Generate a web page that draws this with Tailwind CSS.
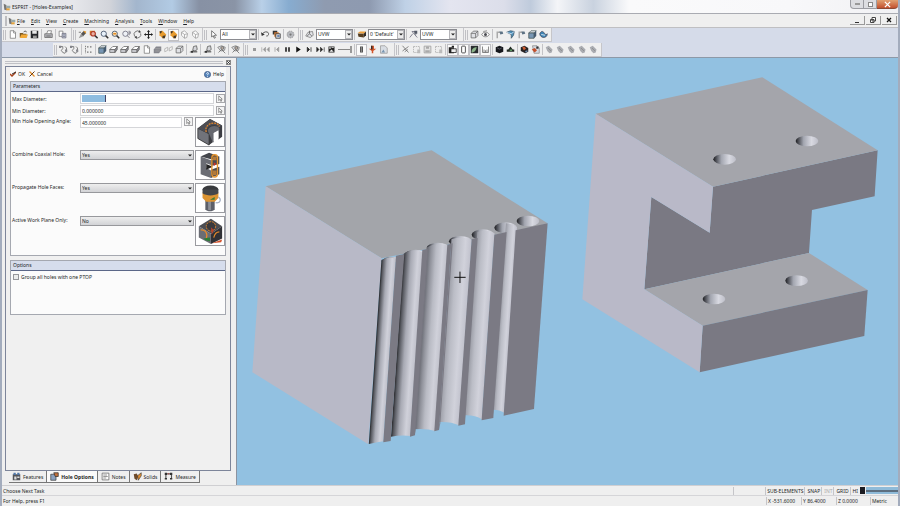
<!DOCTYPE html>
<html lang="en">
  <head>
    <meta charset="UTF-8" />
    <meta name="viewport" content="width=device-width, initial-scale=1.0" />
    <title>ESPRIT - [Holes-Examples]</title>
    <script src="https://cdn.jsdelivr.net/npm/@tailwindcss/browser@4"></script>
  </head>
  <body
    class="flex h-screen flex-col overflow-hidden border-x-2 border-[#a3acbd] bg-[#efefef] font-['Noto_Sans',sans-serif] text-[5px] leading-[8px] whitespace-nowrap text-[#1c1f26]"
  >
    <!-- icon set -->
    <svg class="hidden">
      <symbol id="new" viewBox="0 0 12 12"><path d="M3 1h5l2 2v8H3z" fill="#fff" stroke="#777" /><path d="M7.500 1v3H10" fill="none" stroke="#777" /></symbol>
      <symbol id="open" viewBox="0 0 12 12"><path d="M1 4h4l1 1h4v5H1z" fill="#7c5a24" /><path d="M3 6h9l-2 4.500H1z" fill="#f0a836" /><path d="M6 3c1-2 4-2 4 0" stroke="#333" fill="none" /></symbol>
      <symbol id="save" viewBox="0 0 12 12"><path d="M1 1h10v10H1z" fill="#26272b" /><path d="M3 1h6v4H3z" fill="#e8e8e8" /><path d="M4 7.500h5V11H4z" fill="#999" /></symbol>
      <symbol id="print" viewBox="0 0 12 12"><path d="M3.500 5L5 1h5L9 5" fill="#fff" stroke="#777" /><path d="M1 5h10v5H1z" fill="#b5b6bb" stroke="#666" /><path d="M3 8h6" stroke="#555" /></symbol>
      <symbol id="copy" viewBox="0 0 12 12"><path d="M1.500 1.500h5v7h-5z" fill="#fff" stroke="#777" /><path d="M5.500 4.500h5v6h-5z" fill="#cfd6e4" stroke="#667" /><path d="M6.500 6.500h3m-3 2h3" stroke="#667" /></symbol>
      <symbol id="brush" viewBox="0 0 12 12"><path d="M1 11l3-6 4 3z" fill="#999" /><path d="M4 5l4-4 3 3-4 4z" fill="#555" /><path d="M7 1l4 1-1 3z" fill="#e79b2e" /><path d="M1 3h3" stroke="#555" /></symbol>
      <symbol id="zoomarea" viewBox="0 0 12 12"><path d="M1 1h7v6H1z" fill="#d9862f" /><circle cx="5.500" cy="5" r="3" fill="#e8b0a0" stroke="#b03a2a" stroke-width="1.500" /><path d="M8 7.500l3.500 3.500" stroke="#333" stroke-width="2" /></symbol>
      <symbol id="zoom" viewBox="0 0 12 12"><circle cx="5" cy="5" r="3.500" fill="#e8f1fa" stroke="#4b5a70" stroke-width="1.200" /><path d="M7.500 7.500l3.500 3.500" stroke="#333" stroke-width="2" /></symbol>
      <symbol id="zoomout" viewBox="0 0 12 12"><circle cx="5" cy="5" r="3.500" fill="#fbe6c4" stroke="#4b5a70" stroke-width="1.200" /><path d="M3 5h4" stroke="#e08a20" stroke-width="2" /><path d="M7.500 7.500l3.500 3.500" stroke="#333" stroke-width="2" /></symbol>
      <symbol id="zoomfit" viewBox="0 0 12 12"><circle cx="4.500" cy="5" r="3.500" fill="#eef1f6" stroke="#667" /><path d="M7 7.500l3 3M9.500 1v6M11 2v3" stroke="#556" /></symbol>
      <symbol id="rotate" viewBox="0 0 12 12"><path d="M2 8A4.500 4.500 0 0 1 9 2.500M10.200 4.500A4.500 4.500 0 0 1 3.500 9.800" fill="none" stroke="#555" /><path d="M8 0l3 3-3.500.5zM5 12L1.500 9 5 8z" fill="#444" /></symbol>
      <symbol id="pan" viewBox="0 0 12 12"><path d="M6 1v10M1 6h10" stroke="#222" stroke-width="1.500" /><path d="M6 0l2 2.500H4zM6 12l2-2.500H4zM0 6l2.500-2v4zM12 6L9.500 4v4z" fill="#222" /></symbol>
      <symbol id="gold" viewBox="0 0 12 12"><path d="M2 2l4-1 5 5-2 5H6L2 7z" fill="#e79b2e" /><path d="M2 2l3-1v2L3 5zM6 8l4-1-1 4H6z" fill="#41362a" /></symbol>
      <symbol id="ghost" viewBox="0 0 12 12"><path d="M2 3l4-2 4 4-1 5-3 1-4-4z" fill="#fafafa" stroke="#999" /><path d="M2 3l4 3 4-1M6 6v5" stroke="#999" fill="none" /></symbol>
      <symbol id="arrow" viewBox="0 0 12 12"><path d="M3.500 1v8.500l2-2L7 11l1.500-.7L7 7h3z" fill="#fff" stroke="#555" /></symbol>
      <symbol id="undo" viewBox="0 0 12 12"><path d="M2 5c3-4 9-3 8 1-.5 2-2 2-3 2" fill="none" stroke="#555" stroke-width="1.300" /><path d="M0 3l1 5 4-2z" fill="#333" /></symbol>
      <symbol id="layers" viewBox="0 0 12 12"><path d="M1 1h6v5H1z" fill="#333" /><path d="M3 3h6v6H3z" fill="#cf7a35" /><path d="M5 5h6v6H5z" fill="#ddd" stroke="#333" /><path d="M7 7h3v2H7z" fill="#456aa5" /></symbol>
      <symbol id="gear" viewBox="0 0 12 12"><circle cx="6" cy="6" r="4.500" fill="#b8babf" stroke="#888" stroke-dasharray="2 1" /><circle cx="6" cy="6" r="1.500" fill="#777" /></symbol>
      <symbol id="plane" viewBox="0 0 12 12"><path d="M1 8l3-5 6-1 1 5-4 3z" fill="#e4e5e9" stroke="#777" /><path d="M3 8l3-3 3 3M6 5V1" stroke="#555" fill="none" /></symbol>
      <symbol id="stack" viewBox="0 0 12 12"><path d="M1 4l3-2h8l-3 3z" fill="#f0a23c" /><path d="M1 4.500l8 .5v5L2 9z" fill="#553d20" /><path d="M9 5l3-3v5l-3 3z" fill="#2f2a26" /></symbol>
      <symbol id="axes" viewBox="0 0 12 12"><path d="M1 10l4-5M4 2h5v5M4 2l7 8" stroke="#667" fill="none" /><path d="M7 1h4v4H7z" fill="#555b68" /></symbol>
      <symbol id="box" viewBox="0 0 12 12"><path d="M1.500 4.500h6v6h-6zM1.500 4.500l3-3h6v6l-3 3M7.500 4.500l3-3" fill="#e0e1e5" stroke="#666" /></symbol>
      <symbol id="eye" viewBox="0 0 12 12"><path d="M1 6c2-4 8-4 10 0-2 4-8 4-10 0z" fill="#fff" stroke="#666" /><circle cx="6" cy="6" r="2" fill="#4b4c52" /><path d="M3 2l5-1" stroke="#777" /></symbol>
      <symbol id="corner" viewBox="0 0 12 12"><path d="M3 11V3h4" fill="none" stroke="#aaa" stroke-width="2" /><path d="M6 2h4l1 3-4 1z" fill="#5d7284" /></symbol>
      <symbol id="shell" viewBox="0 0 12 12"><path d="M1 3l5-2 5 1-1 5-3 4V6z" fill="#4c8fb8" stroke="#3e5568" /><path d="M1 3l6 2 4-3" fill="none" stroke="#def" /></symbol>
      <symbol id="bluebox" viewBox="0 0 12 12"><path d="M1 4l3-3h7L8 4z" fill="#dfe3ea" stroke="#566" /><path d="M1 4h7v7H1z" fill="#7896b4" stroke="#455" /><path d="M8 4l3-3v7l-3 3z" fill="#455a70" /></symbol>
      <symbol id="sweep" viewBox="0 0 12 12"><path d="M1 5c2-4 4-4 6-1s3 2 4 1c0 4-3 5-5 5S1 8 1 5z" fill="#3e84b4" stroke="#445" /><path d="M3 6l5 1" stroke="#fff" /></symbol>
      <symbol id="chain" viewBox="0 0 12 12"><path d="M1 2h4v3l-2 2 2 3 3 1 2-2V4L8 2" fill="none" stroke="#777" stroke-width="1.200" /><path d="M0 1h3v3H0zM8 6h3v3H8z" fill="#85868c" /></symbol>
      <symbol id="grid" viewBox="0 0 12 12"><path d="M2 1v10" stroke="#666" stroke-dasharray="2 1" /><path d="M4 2.500h7M4 9.500h7" stroke="#777" stroke-dasharray="2 2" stroke-width="1.500" /></symbol>
      <symbol id="slab" viewBox="0 0 12 12"><path d="M1 6l4-4h6L8 6z" fill="#fff" stroke="#666" /><path d="M1 6h7v4H1z" fill="#c4c5ca" stroke="#666" /><path d="M8 6l3-4v4l-3 4z" fill="#8b8c93" stroke="#666" /></symbol>
      <symbol id="solid" viewBox="0 0 12 12"><path d="M1 6l3-4h7v5l-3 4H1z" fill="#85868d" /><path d="M3 5h7M3 8h6" stroke="#aaa" /></symbol>
      <symbol id="pair" viewBox="0 0 12 12"><path d="M1 9V5l4-2v4zM7 8V4l4-2v4z" fill="#f4f4f4" stroke="#aaa" /></symbol>
      <symbol id="mill" viewBox="0 0 12 12"><path d="M1 9l5-2 5 1v2H1z" fill="#777" /><path d="M5 7l1-5 4-1 1 5-3 2z" fill="#d5d6da" stroke="#555" /><circle cx="4" cy="9" r="1.500" fill="#333" /></symbol>
      <symbol id="tool" viewBox="0 0 12 12"><path d="M1 3l5-2 5 2-1 4-5 1z" fill="#dddee2" stroke="#777" /><path d="M2 10l4-4 5 5" fill="none" stroke="#666" /><circle cx="7" cy="4" r="2" fill="#b6a9a0" stroke="#666" /></symbol>
      <symbol id="stop" viewBox="0 0 12 12"><path d="M4 4h4v4H4z" fill="#999" /></symbol>
      <symbol id="first" viewBox="0 0 12 12"><path d="M1 3v6M6 3L3 6l3 3zM11 3L8 6l3 3z" fill="#999" stroke="#999" stroke-width=".8" /></symbol>
      <symbol id="prev" viewBox="0 0 12 12"><path d="M4 3v6M9 3L6 6l3 3z" fill="#999" stroke="#999" /></symbol>
      <symbol id="pause" viewBox="0 0 12 12"><path d="M3 3h2v6H3zM7 3h2v6H7z" fill="#111" /></symbol>
      <symbol id="play" viewBox="0 0 12 12"><path d="M3 2l6 4-6 4z" fill="#111" /></symbol>
      <symbol id="next" viewBox="0 0 12 12"><path d="M3 3l3 3-3 3zM8 3v6" fill="#222" stroke="#222" /></symbol>
      <symbol id="last" viewBox="0 0 12 12"><path d="M1 3l3 3-3 3zM6 3l3 3-3 3zM11 3v6" fill="#222" stroke="#222" stroke-width=".8" /></symbol>
      <symbol id="film" viewBox="0 0 12 12"><path d="M2 2h8v8H2z" fill="#222" /><path d="M3 3h2v2H3zM6 3h3v1H6zM3 9l3-3 3 3z" fill="#eee" /></symbol>
      <symbol id="holder" viewBox="0 0 12 12"><path d="M4 2h4v8H4z" fill="#555" /><path d="M6 2v8" stroke="#999" /></symbol>
      <symbol id="drill" viewBox="0 0 12 12"><path d="M4 1h4v4h3L7 8v3H5V8L1 5h3z" fill="#d2542a" /><path d="M4 1h2v5H4z" fill="#3b2c25" /></symbol>
      <symbol id="part" viewBox="0 0 12 12"><path d="M2 1h6l3 3v7H2z" fill="#d9dde3" stroke="#999" /><path d="M3 10l3-4 2 4z" fill="#7895b0" /></symbol>
      <symbol id="cut" viewBox="0 0 12 12"><path d="M2 1l8 9M10 2L2 8M5 9l4-3" stroke="#666" /></symbol>
      <symbol id="doc" viewBox="0 0 12 12"><path d="M2 2h8v8H2z" fill="#eee" stroke="#aaa" stroke-dasharray="2 1" /><path d="M7 6h4v5H7z" fill="#bbb" /></symbol>
      <symbol id="disk" viewBox="0 0 12 12"><path d="M1.500 1.500h9v9h-9z" fill="#e2e2e2" stroke="#999" /><path d="M4 2h4v3H4zM3 7h6v3H3z" fill="#aaa" /></symbol>
      <symbol id="camera" viewBox="0 0 12 12"><path d="M1 3h7v8H1z" fill="#222" /><path d="M4 5h7v5H4z" fill="#eee" stroke="#222" /><path d="M5 2h3" stroke="#222" stroke-width="2" /></symbol>
      <symbol id="phone" viewBox="0 0 12 12"><rect x="3.500" y="1.500" width="5" height="9" rx="1" fill="#fff" stroke="#222" /></symbol>
      <symbol id="sphere" viewBox="0 0 12 12"><path d="M1 1h10v10H1z" fill="#2a2d30" /><path d="M2 10c0-5 3-7 7-7-1 4-3 7-7 7z" fill="#8cb38a" /></symbol>
      <symbol id="ruler" viewBox="0 0 12 12"><path d="M2 2v8h8V2M4 10V6M6 10V7M8 10V6" fill="none" stroke="#666" /></symbol>
      <symbol id="cube" viewBox="0 0 12 12"><path d="M1 3l5-2 5 2v6l-5 2-5-2z" fill="#16181c" /><path d="M3 4l3 1.500L9 4" fill="none" stroke="#667" /></symbol>
      <symbol id="tree" viewBox="0 0 12 12"><path d="M6 2l3 4h2v3H1V6h2z" fill="#222a24" /><path d="M5 6h3v2H5z" fill="#5b9a63" /></symbol>
      <symbol id="redcube" viewBox="0 0 12 12"><path d="M1 3l5-2 5 3v5l-4 2-6-3z" fill="#272323" /><path d="M3 3l3-1 2 3-3 2z" fill="#cf5f33" /><path d="M7 8l3-1v2l-3 1z" fill="#6b89ad" /></symbol>
      <symbol id="redpart" viewBox="0 0 12 12"><path d="M2 1h6l3 3v7H4z" fill="#d5dae2" stroke="#888" /><path d="M1 6l4-2 3 3-3 3z" fill="#c4502b" /><path d="M7 2h3v3H7z" fill="#333" /></symbol>
      <symbol id="hand" viewBox="0 0 12 12"><path d="M1 3l4-2 5 5-1 4-3 1-3-3z" fill="#a9abb0" /><path d="M4 4l4 4" stroke="#888" /></symbol>
      <symbol id="cursor" viewBox="0 0 12 12"><path d="M3 1.500v8l2-2L6.500 11 8 10.300 6.500 7H9z" fill="#fff" stroke="#555" /></symbol>
      <symbol id="down" viewBox="0 0 6 4"><path d="M0 .5h6L3 3.500z" fill="#222" /></symbol>
      <symbol id="app" viewBox="0 0 12 12"><path d="M1 1l4 2 1 8-4-1z" fill="#777" /><path d="M5 4h6v4H6z" fill="#9aa" /><path d="M5 8h5v3H5z" fill="#e5a23c" /></symbol>
    </svg>

    <!-- title bar -->
    <header
      class="flex h-[14px] shrink-0 items-start justify-between border-b border-[#a9abb2] bg-[linear-gradient(to_right,#e6e7eb_8%,#d2d4da_12%,#a3b6cd_15%,#b2cbe4_19%,#8791a4_22%,#8a94a6_26%,#b9d0e8_29%,#87acd0_32%,#8f9bb0_36%,#8e9ab0_41%,#bfd1e6_45%,#e4e5f0_50%,#dcdeea_56%,#bfcbdc_59%,#f4f5f8_62%,#c9d2df_66%,#fafafb_70%,#f8f8fa_88%,#f1f1f4)]"
    >
      <h1 class="flex items-center gap-px pt-[3px] pl-px">
        <svg class="size-[8px]"><use href="#app" /></svg>
        ESPRIT - [Holes-Examples]
      </h1>
      <div class="flex">
        <button aria-label="Minimize" class="flex h-[9px] w-[14px] items-center justify-center rounded-bl-sm border border-t-0 border-[#9b9ca2] bg-[#dcdde1]">
          <span class="h-[2px] w-[5px] border border-[#999] bg-white"></span>
        </button>
        <button aria-label="Maximize" class="flex h-[9px] w-[13px] items-center justify-center border-r border-b border-[#9b9ca2] bg-[#dcdde1]">
          <span class="size-[5px] border border-[#888] bg-white"></span>
        </button>
        <button aria-label="Close" class="flex h-[9px] w-[21px] items-center justify-center rounded-br-sm border-b border-[#8c4a35] bg-linear-to-b from-[#e0a071] to-[#c2502e]">
          <svg class="size-[7px]" viewBox="0 0 8 8"><path d="M1 1l6 6M7 1L1 7" stroke="#fff" stroke-width="1.500" /></svg>
        </button>
      </div>
    </header>

    <!-- menu bar -->
    <nav class="flex h-[14px] shrink-0 items-center justify-between border-b border-[#bfbfc2] pl-[3px]">
      <div class="flex items-center gap-[6px]">
        <span class="-mr-[5px] h-[10px] w-[2px] border-x border-[#bdbdc0]"></span>
        <svg class="-mr-[5px] size-[8px]"><use href="#app" /></svg>
        <button><u>F</u>ile</button>
        <button><u>E</u>dit</button>
        <button><u>V</u>iew</button>
        <button><u>C</u>reate</button>
        <button><u>M</u>achining</button>
        <button><u>A</u>nalysis</button>
        <button><u>T</u>ools</button>
        <button><u>W</u>indow</button>
        <button><u>H</u>elp</button>
      </div>
      <div class="flex gap-px pr-px">
        <button aria-label="Minimize document" class="flex h-[9px] w-[15px] items-end justify-center border-r border-b border-[#999] pb-px"><span class="h-px w-[4px] bg-[#333]"></span></button>
        <button aria-label="Restore document" class="flex h-[9px] w-[15px] items-center justify-center border-r border-b border-[#999]">
          <svg class="size-[6px]" viewBox="0 0 6 6"><path d="M2 .5h3.500V4H2zM.5 2.500H4v3H.5z" fill="#fff" stroke="#444" /></svg>
        </button>
        <button aria-label="Close document" class="flex h-[9px] w-[15px] items-center justify-center border-r border-b border-[#999]">
          <svg class="size-[6px]" viewBox="0 0 6 6"><path d="M1 1l4 4M5 1L1 5" stroke="#111" stroke-width="1.300" /></svg>
        </button>
      </div>
    </nav>

    <!-- toolbars, filled from the lists in the script -->
    <div id="toolbars" class="flex shrink-0 flex-col gap-px border-b border-[#8d99a8] bg-[#d5dbe9]"></div>

    <div class="flex min-h-0 flex-1">
      <!-- docked project manager -->
      <aside class="flex w-[235px] shrink-0 flex-col border-r border-[#8c93a0] pr-[5px] pl-[3px]">
        <div class="flex h-[8px] shrink-0 items-center gap-[3px]">
          <span class="h-[3px] flex-1 border-y border-[#c0c1c6]"></span>
          <button aria-label="Close panel" class="flex size-[5px] items-center justify-center border border-[#888]">
            <svg class="size-[3px]" viewBox="0 0 4 4"><path d="M0 0l4 4M4 0L0 4" stroke="#222" /></svg>
          </button>
        </div>
        <form class="flex min-h-0 flex-1 flex-col border border-[#7d859a] bg-[#f0f0f0] px-[4px]">
          <div class="flex h-[14px] shrink-0 items-center gap-[4px] bg-[#fafafa]">
            <button type="button" class="flex items-center gap-[2px]">
              <svg class="size-[6px]" viewBox="0 0 6 6"><path d="M0 3l2 2 4-4" fill="none" stroke="#a8431d" stroke-width="1.500" /><path d="M2 3l4-2" stroke="#333" /></svg>
              OK
            </button>
            <button type="button" class="flex items-center gap-[2px]">
              <svg class="size-[6px]" viewBox="0 0 6 6"><path d="M.5.5l5 5" stroke="#e38b27" stroke-width="1.200" /><path d="M5.500.5l-5 5" stroke="#5b3a20" /></svg>
              Cancel
            </button>
            <button type="button" class="ml-auto flex items-center gap-[2px] pr-[2px]">
              <svg class="size-[7px]" viewBox="0 0 8 8"><circle cx="4" cy="4" r="3.500" fill="#5586bd" stroke="#44608a" /><path d="M3 3c0-2 3-1 2 0L4 4.500M4 5.500v1" fill="none" stroke="#fff" /></svg>
              Help
            </button>
          </div>

          <section class="flex h-[175px] shrink-0 flex-col border border-[#a5a8b0] bg-[#fbfbfb]">
            <h2 class="h-[10px] shrink-0 border-b border-[#5b6788] bg-[#d6ddec] pl-[2px]">Parameters</h2>
            <div class="grid grid-cols-[68px_1fr] gap-y-px pt-px pl-px">
              <label for="maxd" class="pt-[2px]">Max Diameter:</label>
              <div class="flex items-center gap-[2px]">
                <div class="relative flex h-[11px] flex-1">
                  <input id="maxd" class="w-full border border-[#d5d6d9] bg-white" />
                  <span class="absolute top-[2px] left-[2px] h-[7px] w-[24px] border-r border-[#446] bg-[#8fbde0]"></span>
                </div>
                <button type="button" aria-label="Pick maximum diameter" class="size-[9px] border border-[#a8a8ab] bg-[#f4f4f4]"><svg class="size-[7px]"><use href="#cursor" /></svg></button>
              </div>
              <label for="mind" class="pt-[2px]">Min Diameter:</label>
              <div class="flex items-center gap-[2px]">
                <input id="mind" value="0.000000" class="h-[11px] w-0 flex-1 border border-[#d5d6d9] bg-white pl-px" />
                <button type="button" aria-label="Pick minimum diameter" class="size-[9px] border border-[#a8a8ab] bg-[#f4f4f4]"><svg class="size-[7px]"><use href="#cursor" /></svg></button>
              </div>
              <label for="angle">Min Hole Opening Angle:</label>
              <div class="flex h-[32px] gap-[2px]">
                <input id="angle" value="45.000000" class="h-[11px] w-0 flex-1 border border-[#d5d6d9] bg-white pl-px" />
                <button type="button" aria-label="Pick opening angle" class="size-[9px] border border-[#a8a8ab] bg-[#f4f4f4]"><svg class="size-[7px]"><use href="#cursor" /></svg></button>
                <svg class="h-[30px] w-[30px] border border-[#9a9ba0] bg-white" viewBox="0 0 30 30">
                  <path d="M2 11L15 1l13 7v12l-4 3V13l-6 3v10l-4 3L2 22z" fill="#3c3d42" />
                  <path d="M2 11l12 6v12L2 22z" fill="#71737a" stroke="#333" stroke-width=".8" />
                  <path d="M2 11L15 1l13 7-4 2c-2-5-15-2-12 6z" fill="#4d4e54" />
                  <path d="M14 17c-5-8 8-11 11-6v3l-6 2v10h-1z" fill="#66686f" />
                  <path d="M19 16l5-3v9l-5 3z" fill="#fff" />
                  <path d="M11 15C8 6 22 2 25 9" fill="none" stroke="#e8872a" stroke-width="1.300" stroke-dasharray="2 1" />
                </svg>
              </div>
              <label for="coax">Combine Coaxial Hole:</label>
              <div class="flex h-[32px] gap-px">
                <div class="relative h-[10px] flex-1">
                  <select id="coax" class="block h-[10px] w-full appearance-none border border-[#97989c] bg-linear-to-b from-[#eee] to-[#d2d3d6] pl-px leading-[8px]"><option>Yes</option><option>No</option></select>
                  <svg class="pointer-events-none absolute top-[4px] right-[2px] h-[3px] w-[4px]"><use href="#down" /></svg>
                </div>
                <svg class="h-[30px] w-[30px] border border-[#9a9ba0] bg-white" viewBox="0 0 30 30">
                  <path d="M5 6l9-4 11 4-8 3z" fill="#44464b" /><path d="M5 6l11 4v5l-5-2v5l5 3v8L5 25z" fill="#6b6d74" />
                  <path d="M16 10l9-4v8l-9 2zM16 20l9-3v8l-9 4z" fill="#4a4c52" /><path d="M11 14l7 3-7 3z" fill="#222" />
                  <rect x="17" y="4" width="6" height="24" rx="3" fill="none" stroke="#e8952d" stroke-width="1.400" /><path d="M18 6h4v4h-4zM18 21h4v5h-4z" fill="#b47a39" />
                  <path d="M19 12l3 2-3 2z" fill="#c83228" />
                </svg>
              </div>
              <label for="prop">Propagate Hole Faces:</label>
              <div class="flex h-[32px] gap-px">
                <div class="relative h-[10px] flex-1">
                  <select id="prop" class="block h-[10px] w-full appearance-none border border-[#97989c] bg-linear-to-b from-[#eee] to-[#d2d3d6] pl-px leading-[8px]"><option>Yes</option><option>No</option></select>
                  <svg class="pointer-events-none absolute top-[4px] right-[2px] h-[3px] w-[4px]"><use href="#down" /></svg>
                </div>
                <svg class="h-[30px] w-[30px] border border-[#9a9ba0] bg-white" viewBox="0 0 30 30">
                  <path d="M10 15h10v12c-2 3-8 3-10 0z" fill="#5d6069" /><path d="M13 16h3v12h-3z" fill="#8e9097" />
                  <path d="M7 9h17v6l-4 4h-9l-4-4z" fill="#dc9432" /><path d="M15 17l5-3v3z" fill="#3c7a33" />
                  <ellipse cx="15.500" cy="6" rx="8.500" ry="4.500" fill="#37393c" /><path d="M7 6v4c4 3 13 3 17 0V6" fill="#44464a" />
                  <path d="M21 20c6 1 6-4 3-6" fill="none" stroke="#a4afc4" stroke-width="1.300" />
                </svg>
              </div>
              <label for="plane-only">Active Work Plane Only:</label>
              <div class="flex h-[32px] gap-px">
                <div class="relative h-[10px] flex-1">
                  <select id="plane-only" class="block h-[10px] w-full appearance-none border border-[#97989c] bg-linear-to-b from-[#eee] to-[#d2d3d6] pl-px leading-[8px]"><option>No</option><option>Yes</option></select>
                  <svg class="pointer-events-none absolute top-[4px] right-[2px] h-[3px] w-[4px]"><use href="#down" /></svg>
                </div>
                <svg class="h-[30px] w-[30px] border border-[#9a9ba0] bg-white" viewBox="0 0 30 30">
                  <path d="M3 10L16 2l12 8-12 8z" fill="#4c4d52" /><path d="M3 10l13 8v11L3 22z" fill="#6b6d74" /><path d="M28 10v13l-12 6V18z" fill="#303136" />
                  <circle cx="16" cy="10" r="5" fill="#3b3a3d" stroke="#e88b2a" stroke-dasharray="2 1" />
                  <path d="M5 14c5-1 8 4 6 9M19 22c1-4 3-6 6-6" fill="none" stroke="#e88b2a" stroke-width="1.200" />
                  <path d="M16 11l3 3-2 5z" fill="#b8402c" /><path d="M8 23l7-1v4l-5-1z" fill="#2d7d36" /><path d="M17 28l11-4-1 3z" fill="#d2502a" />
                </svg>
              </div>
            </div>
          </section>

          <section class="mt-[4px] h-[55px] shrink-0 border border-[#a5a8b0] bg-[#fbfbfb]">
            <h2 class="h-[10px] border-b border-[#5b6788] bg-[#d6ddec] pl-[2px]">Options</h2>
            <label class="flex items-center gap-[2px] pt-[2px] pl-[2px]">
              <input type="checkbox" class="size-[6px] appearance-none border border-[#96979b] bg-[#eceded]" />
              Group all holes with one PTOP
            </label>
          </section>
        </form>
        <div class="mb-[2px] ml-[4px] flex h-[12px] shrink-0" role="tablist">
          <button role="tab" class="flex items-center gap-[2px] border-r border-b border-[#777] px-[3px]">
            <svg class="size-[9px]" viewBox="0 0 12 12"><path d="M1 3h10v8H1z" fill="#53555a" /><path d="M2 1h3v3H2zM7 1h3v3H7z" fill="#4f77a8" /><path d="M3 6h3v4H3zM7 6h3v2H7z" fill="#ddd" /></svg>
            Features
          </button>
          <button role="tab" aria-selected="true" class="flex items-center gap-[2px] border-r border-b border-[#777] bg-[#fafafa] px-[3px] font-bold text-[#222]">
            <svg class="size-[9px]" viewBox="0 0 12 12"><path d="M1 3h7v8H1z" fill="#8aa1c0" stroke="#444" /><path d="M5 1h6v5H7z" fill="#c5703a" stroke="#333" /></svg>
            Hole Options
          </button>
          <button role="tab" class="flex items-center gap-[2px] border-r border-b border-[#777] px-[3px]">
            <svg class="size-[9px]" viewBox="0 0 12 12"><path d="M1.500 1.500h9v9h-9z" fill="#fff" stroke="#666" /><path d="M3 4h5M3 6h6M3 8h4" stroke="#777" /></svg>
            Notes
          </button>
          <button role="tab" class="flex items-center gap-[2px] border-r border-b border-[#777] px-[3px]">
            <svg class="size-[9px]" viewBox="0 0 12 12"><path d="M1 3l4-1 2 4-2 5-3-2z" fill="#6d4a2b" /><path d="M6 5l5-4v4l-4 6z" fill="#e08d31" stroke="#333" stroke-width=".8" /></svg>
            Solids
          </button>
          <button role="tab" class="flex items-center gap-[2px] border-r border-b border-[#777] px-[3px]">
            <svg class="size-[9px]" viewBox="0 0 12 12"><path d="M2.500 9V2.500H10V9" fill="none" stroke="#555" stroke-width="1.500" /><path d="M1 1h3v3H1zM8 1h3v3H8zM1 8h3v2H1zM8 8h3v2H8z" fill="#333" /><path d="M5 2h2v1H5z" fill="#c33" /></svg>
            Measure
          </button>
        </div>
      </aside>

      <!-- model view -->
      <main class="min-w-0 flex-1 bg-[#92c1e1]">
        <svg class="size-full" viewBox="237 58 661 428" preserveAspectRatio="xMinYMin slice">
          <defs>
            <linearGradient id="bore">
              <stop offset="0" stop-color="#1d1d20" /><stop offset=".12" stop-color="#4b4d54" />
              <stop offset=".35" stop-color="#a3a6b0" /><stop offset=".7" stop-color="#d8d9e1" /><stop offset="1" stop-color="#bdbec8" />
            </linearGradient>
            <linearGradient id="fluteDark">
              <stop offset="0" stop-color="#26272a" /><stop offset=".12" stop-color="#585a61" />
              <stop offset=".4" stop-color="#a8aab4" /><stop offset=".75" stop-color="#d0d1da" /><stop offset="1" stop-color="#bfc0ca" />
            </linearGradient>
            <linearGradient id="flute">
              <stop offset="0" stop-color="#63656d" /><stop offset=".2" stop-color="#8f919a" />
              <stop offset=".45" stop-color="#b9bbc4" /><stop offset=".75" stop-color="#d0d1da" /><stop offset="1" stop-color="#bfc0ca" />
            </linearGradient>
            <linearGradient id="fluteLit">
              <stop offset="0" stop-color="#999ba4" /><stop offset=".3" stop-color="#bbbdc6" />
              <stop offset=".7" stop-color="#d1d2db" /><stop offset="1" stop-color="#c0c1cc" />
            </linearGradient>
          </defs>
          <g transform="translate(245 140) scale(.3333)">
            <path d="M62 139L560 31l348 219-28 8-470 97z" fill="#a3a5aa" />
            <path d="M62 139l348 216-40 558L22 697z" fill="#b8b9c7" />
            <g fill="url(#bore)">
              <path d="M410 366q4-16 34-16t34 10v6z" />
              <ellipse cx="512" cy="345" rx="34" ry="16" />
              <ellipse cx="579" cy="324" rx="34" ry="16" />
              <ellipse cx="646" cy="304" rx="34" ry="16" />
              <ellipse cx="714" cy="284" rx="34" ry="16" />
              <ellipse cx="782" cy="263" rx="34" ry="16" />
              <ellipse cx="849" cy="243" rx="34" ry="16" />
            </g>
            <!-- flutes lean with the block, so they are drawn upright and sheared -->
            <g transform="matrix(1 0 -.0685 1 0 0)">
              <path d="M434 360q20-12 43-3v547l-14 2-29 6z" fill="url(#fluteDark)" />
              <path d="M499 342q27-20 58-4v550q-29-3-58 2z" fill="url(#fluteDark)" />
              <path d="M568 322q30-18 63-4v555q-27-8-63-5z" fill="url(#flute)" />
              <path d="M640 298q30-12 61 2v556q-26-12-61-10z" fill="url(#fluteLit)" />
              <path d="M716 277q25-12 52 3v558q-20-13-52-12z" fill="url(#fluteLit)" />
              <path d="M800 250q18 0 34 12v556q-15-9-34-9z" fill="url(#fluteLit)" />
            </g>
            <g fill="#7b7a84">
              <path d="M453 347l25-5-41 561-22 4z" />
              <path d="M532 330l16-4-38 560-15 4z" />
              <path d="M607 314l12-3-37 559-14 4z" />
              <path d="M680 298l18-4-38 559-20 4z" />
              <path d="M748 284l37-8-40 558-35 7z" />
              <path d="M812 271l96-21-41 557-91 20z" />
              <path d="M619 311l4-1-37 540-4 20zM548 326l2 0-38 543-3 18z" />
            </g>
            <path d="M628 412h34M645 395v34" stroke="#111" stroke-width="3" />
          </g>
          <g transform="translate(575 70) scale(.3333)">
            <path d="M414 350l494-109-9 138-188 41-9 129-494 109 21-277 175 107z" fill="#7a7983" />
            <path d="M62 131L562 22l346 219-494 109z" fill="#a4a5ab" />
            <path d="M208 658l494-109 176 111-495 107z" fill="#a4a5ab" />
            <path d="M383 767l495-107-10 138-494 109z" fill="#7a7983" />
            <path d="M62 131l352 219-10 138-175-107-21 277 175 109-9 140L22 688z" fill="#b9b9c8" />
            <g fill="url(#bore)">
              <ellipse cx="449" cy="268" rx="34" ry="16" />
              <ellipse cx="696" cy="213" rx="34" ry="16" />
              <ellipse cx="417" cy="687" rx="34" ry="16" />
              <ellipse cx="665" cy="632" rx="34" ry="16" />
            </g>
          </g>
        </svg>
      </main>
    </div>

    <!-- status bar -->
    <footer class="shrink-0 border-t border-[#cfcfd2] pb-px">
      <div class="flex h-[10px] items-center gap-px border-b border-[#d5d5d8] pl-px">
        <span class="flex-1">Choose Next Task</span>
        <span class="h-[8px] w-[31px] border-l border-[#c5c5c9]"></span>
        <span class="border-x border-[#c5c5c9] px-px">SUB-ELEMENTS</span>
        <span class="border-r border-[#c5c5c9] px-px">SNAP</span>
        <span class="border-r border-[#c5c5c9] px-px text-[#aaa]">INT</span>
        <span class="border-r border-[#c5c5c9] px-px">GRID</span>
        <span class="px-px">HI</span>
        <span class="h-[7px] w-[5px] bg-[#1c1c22]"></span>
        <span class="flex h-[7px] w-[32px] items-center bg-[#8fbbd9]"><span class="h-[2px] w-full bg-[#5d6f80]"></span></span>
      </div>
      <div class="flex h-[9px] items-center pl-px">
        <span class="flex-1">For Help, press F1</span>
        <span class="w-[35px] border-l border-[#c5c5c9] pl-px">X -531.6000</span>
        <span class="w-[35px] border-l border-[#c5c5c9] pl-px">Y 86.4000</span>
        <span class="w-[34px] border-l border-[#c5c5c9] pl-px">Z 0.0000</span>
        <span class="w-[28px] border-l border-[#c5c5c9] pl-px">Metric</span>
      </div>
    </footer>

    <script>
      // "|" is a separator, "[Name]" a drop-down, "-" the speed slider, "*" marks a pressed button
      const rows = [
        [
          { w: 70, items: "new open save | print | copy" },
          { w: 131, items: "brush zoomarea zoom zoomout zoomfit rotate pan | gold gold* ghost ghost" },
          { w: 96, items: "arrow [All] | undo layers | gear" },
          { w: 165, items: "plane [UVW] | stack [0_'Default'] | axes [UVW]" },
          { w: 88, items: "box eye | corner shell corner bluebox sweep" },
        ],
        [
          { w: 191, offset: true, items: "chain chain | grid | bluebox slab slab slab new solid pair box | mill | mill | tool | tool" },
          { w: 151, items: "stop first prev pause play next last film - | holder* drill part" },
          { w: 207, items: "cut doc disk doc | camera* phone* sphere* ruler* | cube tree | redcube redpart | hand hand hand hand hand" },
        ],
      ];

      const render = (item) => {
        if (item === "|") return '<span class="mx-px h-[11px] w-px shrink-0 bg-[#c3c3c6]"></span>';
        if (item === "-")
          return '<input type="range" aria-label="Simulation speed" value="100" class="mx-px h-[7px] w-[14px] shrink-0 appearance-none bg-linear-to-b from-transparent from-40% via-[#888] via-50% to-transparent to-60% [&::-webkit-slider-thumb]:h-[7px] [&::-webkit-slider-thumb]:w-[2px] [&::-webkit-slider-thumb]:appearance-none [&::-webkit-slider-thumb]:bg-[#999]" />';
        if (item[0] === "[") {
          const name = item.slice(1, -1).replace("_", " ");
          return `<span class="relative ml-px h-[11px] w-[37px] shrink-0">
            <select aria-label="${name}" class="block h-[11px] w-full appearance-none border border-[#8a8b90] bg-white pl-px leading-[9px]"><option>${name}</option></select>
            <span class="pointer-events-none absolute top-px right-px flex h-[9px] w-[7px] items-center justify-center border border-[#b5b5b9] bg-[#ececec]"><svg class="h-[3px] w-[4px]"><use href="#down" /></svg></span>
          </span>`;
        }
        const id = item.replace("*", "");
        const look = item.endsWith("*")
          ? "flex h-[12px] w-[11px] shrink-0 items-center justify-center border border-[#c0c0c4] bg-[#fafafa]"
          : "flex h-[12px] w-[11px] shrink-0 items-center justify-center";
        return `<button aria-label="${id}" class="${look}"><svg class="size-[9px] shrink-0"><use href="#${id}" /></svg></button>`;
      };

      document.getElementById("toolbars").innerHTML = rows
        .map(
          (bars) =>
            '<div class="flex h-[14px]">' +
            bars
              .map(
                (bar) =>
                  `<div class="${bar.offset ? "ml-[51px] " : ""}flex shrink-0 items-center border-r border-b border-[#c6c6ca] bg-[#efefef] pl-px" style="width:${bar.w}px">
                    <span class="mr-px h-[10px] w-[3px] shrink-0 border-x border-[#c0c0c4]"></span>
                    ${bar.items.split(" ").map(render).join("")}
                  </div>`
              )
              .join("") +
            "</div>"
        )
        .join("");
    </script>
  </body>
</html>
